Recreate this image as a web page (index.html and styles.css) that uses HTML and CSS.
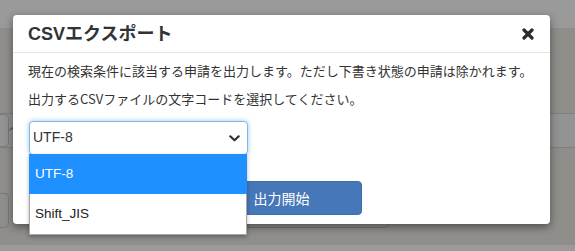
FILE: index.html
```html
<!DOCTYPE html>
<html lang="ja">
<head>
<meta charset="utf-8">
<title>CSVエクスポート</title>
<link rel="stylesheet" href="styles.css">
</head>
<body>
<div class="page">
  <div class="topbar"></div>
  <div class="band band1"></div>
  <div class="band band2"><div class="lbox"></div><span class="caret"></span></div>
  <div class="band band3">
    <div class="row">
      <div class="lbox lbox2"></div>
      <div class="wbox"></div>
    </div>
  </div>
  <div class="band band4"></div>
</div>

<div class="modal">
  <div class="modal-header">
    <h1 class="modal-title">CSVエクスポート</h1>
    <svg class="close" width="12" height="12" viewBox="0 0 12 12" aria-label="閉じる">
      <path d="M2 2 L10 10 M10 2 L2 10" stroke="#2b2b2b" stroke-width="3.2" stroke-linecap="round" fill="none"/>
    </svg>
  </div>
  <div class="modal-body">
    <p class="msg">現在の検索条件に該当する申請を出力します。ただし下書き状態の申請は除かれます。</p>
    <p class="msg msg2">出力するCSVファイルの文字コードを選択してください。</p>
    <div class="select-wrap">
      <div class="select">
        <span class="select-value">UTF-8</span>
        <svg class="chev" width="11" height="7" viewBox="0 0 11 7">
          <path d="M1.3 1.3 L5.5 5.3 L9.7 1.3" stroke="#333" stroke-width="2.2" fill="none" stroke-linecap="round" stroke-linejoin="round"/>
        </svg>
      </div>
      <ul class="options">
        <li class="option active">UTF-8</li>
        <li class="option">Shift_JIS</li>
      </ul>
    </div>
    <div class="footer">
      <button class="btn-primary">出力開始</button>
    </div>
  </div>
</div>
</body>
</html>
```

FILE: styles.css
```css
html, body {
  margin: 0;
  padding: 0;
}
body {
  width: 575px;
  height: 251px;
  overflow: hidden;
  background: #9a9a9a;
  font-family: "Noto Sans CJK JP", "Liberation Sans", sans-serif;
  color: #333;
  position: relative;
}
.page {
  display: flex;
  flex-direction: column;
  height: 251px;
}
.topbar {
  height: 28px;
  background: #9a9a9a;
}
.band1 {
  height: 85px;
  background: #8f8e8b;
}
.band2 {
  height: 33px;
  background: #939393;
  border-top: 1px solid #7f7f7f;
  border-bottom: 1px solid #7f7f7f;
  display: flex;
  align-items: stretch;
}
.lbox {
  width: 13px;
  margin-left: -4px;
  border: 1px solid #7a7a7a;
  border-radius: 4px;
  box-sizing: border-box;
  background: #939393;
}
.caret {
  width: 3px;
  height: 3px;
  margin: 14px 0 0 1px;
  border-top: 1px solid #555;
  border-left: 1px solid #555;
  transform: rotate(45deg);
}
.band3 {
  height: 97px;
  background: #8f8e8b;
}
.row {
  display: flex;
  margin-top: 45px;
  height: 35px;
}
.lbox2 {
  width: 13px;
  background: #8f8e8b;
}
.wbox {
  width: 160px;
  margin-left: 220px;
  border: 1px solid #777;
  border-radius: 4px;
  box-sizing: border-box;
}
.band4 {
  flex: 1;
  background: #9a9a9a;
}

.modal {
  position: absolute;
  left: 13px;
  top: 15px;
  width: 537px;
  height: 209px;
  background: #fff;
  border-radius: 4px;
  box-shadow: 0 3px 8px rgba(0, 0, 0, 0.45);
}
.modal-header {
  height: 38px;
  box-sizing: border-box;
  padding: 0 16px 0 15px;
  display: flex;
  align-items: center;
  justify-content: space-between;
  border-bottom: 1px solid #e6e5df;
}
.modal-title {
  margin: 0;
  font-family: "Liberation Sans", "Noto Sans CJK JP", sans-serif;
  font-size: 18px;
  font-weight: bold;
  line-height: 24px;
  color: #333;
}
.close {
  display: block;
  margin-top: 1px;
}
.modal-body {
  padding: 8px 15px 0;
}
.msg {
  margin: 0;
  font-size: 13px;
  line-height: 19.5px;
  color: #333;
}
.msg2 {
  margin-top: 8.5px;
}
.select-wrap {
  position: relative;
  margin: 12px 0 0 1px;
  width: 219px;
}
.select {
  height: 34px;
  box-sizing: border-box;
  border: 1px solid #80b6e8;
  border-radius: 4px;
  box-shadow: 0 0 5px rgba(102, 175, 233, 0.7);
  display: flex;
  align-items: center;
  justify-content: space-between;
  padding: 0 7px 1px 3px;
  background: #fff;
}
.select-value {
  font-family: "Liberation Sans", Arial, sans-serif;
  font-size: 14px;
  color: #333;
}
.chev {
  display: block;
  margin-top: 2px;
}
.options {
  position: absolute;
  top: 33px;
  left: 0;
  width: 218px;
  margin: 0;
  padding: 0;
  list-style: none;
  background: #fff;
  border: 1px solid #a7a7a7;
  border-top: none;
  box-sizing: border-box;
  box-shadow: 0 2px 4px rgba(0, 0, 0, 0.3);
  z-index: 2;
}
.option {
  height: 40px;
  display: flex;
  align-items: center;
  padding: 0 0 0 5px;
  font-family: "Liberation Sans", Arial, sans-serif;
  font-size: 13.5px;
  color: #222;
}
.option.active {
  background: #1e90ff;
  color: #fff;
  margin: 0 -1px;
  padding-left: 6px;
}
.footer {
  display: flex;
  justify-content: center;
  margin-top: 26px;
}
.btn-primary {
  width: 160px;
  height: 34px;
  border: 1px solid #3f6ead;
  border-radius: 4px;
  background: #4677b8;
  color: #fff;
  font-family: "Noto Sans CJK JP", sans-serif;
  font-size: 14px;
  padding: 0;
}
```
